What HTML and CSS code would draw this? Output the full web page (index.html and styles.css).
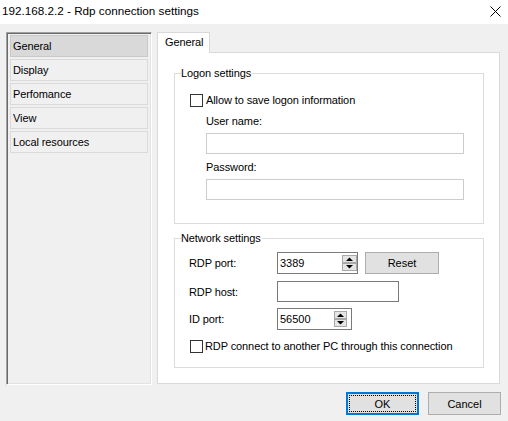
FILE: index.html
```html
<!DOCTYPE html>
<html>
<head>
<meta charset="utf-8">
<link rel="stylesheet" href="styles.css">
</head>
<body>
<div class="titlebar">
  <span class="title">192.168.2.2 - Rdp connection settings</span>
  <svg class="close" width="11" height="11" viewBox="0 0 11 11"><path d="M0.5 0.5 L10.5 10.5 M10.5 0.5 L0.5 10.5" stroke="#000" stroke-width="1" fill="none"/></svg>
</div>
<div class="main">
  <div class="nav">
    <div class="nav-item active">General</div>
    <div class="nav-item">Display</div>
    <div class="nav-item">Perfomance</div>
    <div class="nav-item">View</div>
    <div class="nav-item">Local resources</div>
  </div>
  <div class="tabs">
    <div class="tabstrip"><div class="tab">General</div></div>
    <div class="page">
      <fieldset class="group logon">
        <legend>Logon settings</legend>
        <div class="logon-body">
          <label class="check"><input type="checkbox" class="box"><span>Allow to save logon information</span></label>
          <div class="label first">User name:</div>
          <input class="field wide" type="text">
          <div class="label">Password:</div>
          <input class="field wide" type="text">
        </div>
      </fieldset>
      <fieldset class="group network">
        <legend>Network settings</legend>
        <div class="net-body">
          <div class="row">
            <span class="row-label">RDP port:</span>
            <div class="spin-field port">
              <input class="spin-input" type="text" value="3389">
              <svg class="spinner" width="15" height="16" viewBox="0 0 15 16"><rect x="0.5" y="0.5" width="14" height="7" fill="#e5e5e5" stroke="#a8a8a8"/><rect x="0.5" y="8.5" width="14" height="7" fill="#e5e5e5" stroke="#a8a8a8"/><polygon points="4,6 11,6 7.5,2.5" fill="#000"/><polygon points="4,10 11,10 7.5,13.5" fill="#000"/></svg>
            </div>
            <button class="btn reset">Reset</button>
          </div>
          <div class="row host">
            <span class="row-label">RDP host:</span>
            <input class="field net host-field" type="text">
          </div>
          <div class="row idport">
            <span class="row-label">ID port:</span>
            <div class="spin-field id">
              <input class="spin-input" type="text" value="56500">
              <svg class="spinner small" width="13" height="16" viewBox="0 0 13 16"><rect x="0.5" y="0.5" width="12" height="7" fill="#e5e5e5" stroke="#a8a8a8"/><rect x="0.5" y="8.5" width="12" height="7" fill="#e5e5e5" stroke="#a8a8a8"/><polygon points="3,6 10,6 6.5,2.5" fill="#000"/><polygon points="3,10 10,10 6.5,13.5" fill="#000"/></svg>
            </div>
          </div>
          <label class="check net-check"><input type="checkbox" class="box"><span>RDP connect to another PC through this connection</span></label>
        </div>
      </fieldset>
    </div>
  </div>
</div>
<div class="buttons">
  <button class="btn ok">OK</button>
  <button class="btn cancel">Cancel</button>
</div>
</body>
</html>
```
FILE: styles.css
```css
* { box-sizing: border-box; }
html, body { margin: 0; padding: 0; }
body {
  width: 508px;
  height: 421px;
  overflow: hidden;
  background: #f0f0f0;
  font-family: "Liberation Sans", Arial, sans-serif;
  font-size: 11px;
  letter-spacing: -0.1px;
  color: #000;
}
.titlebar {
  height: 24px;
  background: #fff;
  display: flex;
  align-items: flex-start;
}
.title {
  font-size: 11.7px;
  line-height: 22px;
  padding-left: 2px;
  letter-spacing: 0;
}
.close {
  margin-left: auto;
  margin-top: 6px;
  margin-right: 7px;
}
.main {
  display: flex;
  gap: 5px;
  padding: 8px 0 0 6px;
  height: 361px;
}
.nav {
  width: 146px;
  height: 353px;
  border: 1px solid;
  border-color: #a0a0a0 #ffffff #ffffff #a0a0a0;
  box-shadow: inset 1px 1px 0 #696969, inset -1px -1px 0 #e3e3e3;
  padding: 2px 3px;
}
.nav-item {
  height: 22px;
  margin-bottom: 2px;
  border: 1px solid #dadada;
  padding-left: 2px;
  line-height: 20px;
}
.nav-item.active {
  background: #d9d9d9;
  border-color: #c8c8c8;
}
.tabs {
  width: 343px;
  height: 352px;
  display: flex;
  flex-direction: column;
}
.tabstrip {
  height: 21px;
  margin-bottom: -1px;
  display: flex;
}
.tab {
  position: relative;
  z-index: 1;
  width: 53px;
  height: 21px;
  background: #fff;
  border: 1px solid #d9d9d9;
  border-bottom: none;
  padding-left: 7px;
  line-height: 19px;
}
.page {
  height: 332px;
  background: #fff;
  border: 1px solid #d9d9d9;
  padding: 0 15px 0 16px;
}
.group {
  border: 1px solid #dcdcdc;
  margin: 0;
  padding: 0;
  min-width: 0;
}
.group legend {
  margin-left: 6px;
  padding: 0 1px 0 0;
  line-height: 13px;
}
.logon { margin-top: 14px; }
.network { margin-top: 8px; }
.logon-body {
  padding: 14px 0 23px 15px;
  display: flex;
  flex-direction: column;
  align-items: flex-start;
}
.check {
  display: flex;
  align-items: center;
  height: 13px;
  line-height: 13px;
}
.box {
  appearance: none;
  -webkit-appearance: none;
  margin: 0 3px 0 0;
  width: 13px;
  height: 13px;
  border: 1px solid #333;
  background: #fff;
}
.label {
  margin-top: 7px;
  margin-left: 16px;
  line-height: 13px;
}
.label.first { margin-top: 8px; }
.field {
  appearance: none;
  margin: 0;
  font: inherit;
  background: #fff;
  padding: 0 2px;
}
.field.wide {
  margin-top: 5px;
  margin-left: 16px;
  width: 258px;
  height: 21px;
  border: 1px solid #cccccc;
}
.net-body {
  padding: 7px 0 14px 14px;
  display: flex;
  flex-direction: column;
  align-items: flex-start;
}
.row {
  display: flex;
  align-items: center;
  height: 22px;
}
.row.host { margin-top: 7px; height: 21px; }
.row.idport { margin-top: 6px; }
.row-label {
  width: 88px;
}
.spin-field {
  display: flex;
  align-items: center;
  height: 22px;
  border: 1px solid #7a7a7a;
  background: #fff;
}
.spin-field.port { width: 81px; }
.spin-field.id { width: 75px; }
.spin-input {
  flex: 1;
  min-width: 0;
  border: none;
  outline: none;
  font: inherit;
  padding: 0 0 0 2px;
  margin: 0;
  height: 18px;
  background: transparent;
}
.spinner { flex: none; margin-right: 0; }
.spinner.small { margin-right: 4px; }
.field.net {
  height: 21px;
  border: 1px solid #7a7a7a;
}
.host-field { width: 122px; }
.btn {
  font: inherit;
  color: #000;
  margin: 0;
  padding: 0;
  background: #e1e1e1;
  border: 1px solid #adadad;
}
.reset {
  margin-left: 7px;
  width: 74px;
  height: 22px;
}
.net-check {
  margin-top: 10px;
  margin-left: 1px;
}
.net-check .box { margin-right: 2px; }
.buttons {
  display: flex;
  justify-content: flex-end;
  gap: 9px;
  padding-right: 7px;
  margin-top: 7px;
}
.buttons .btn {
  width: 73px;
  height: 23px;
}
.ok {
  border-color: #0078d7 !important;
  box-shadow: inset 0 0 0 1px #0078d7;
  outline: 1px dotted #000;
  outline-offset: -4px;
}
```
